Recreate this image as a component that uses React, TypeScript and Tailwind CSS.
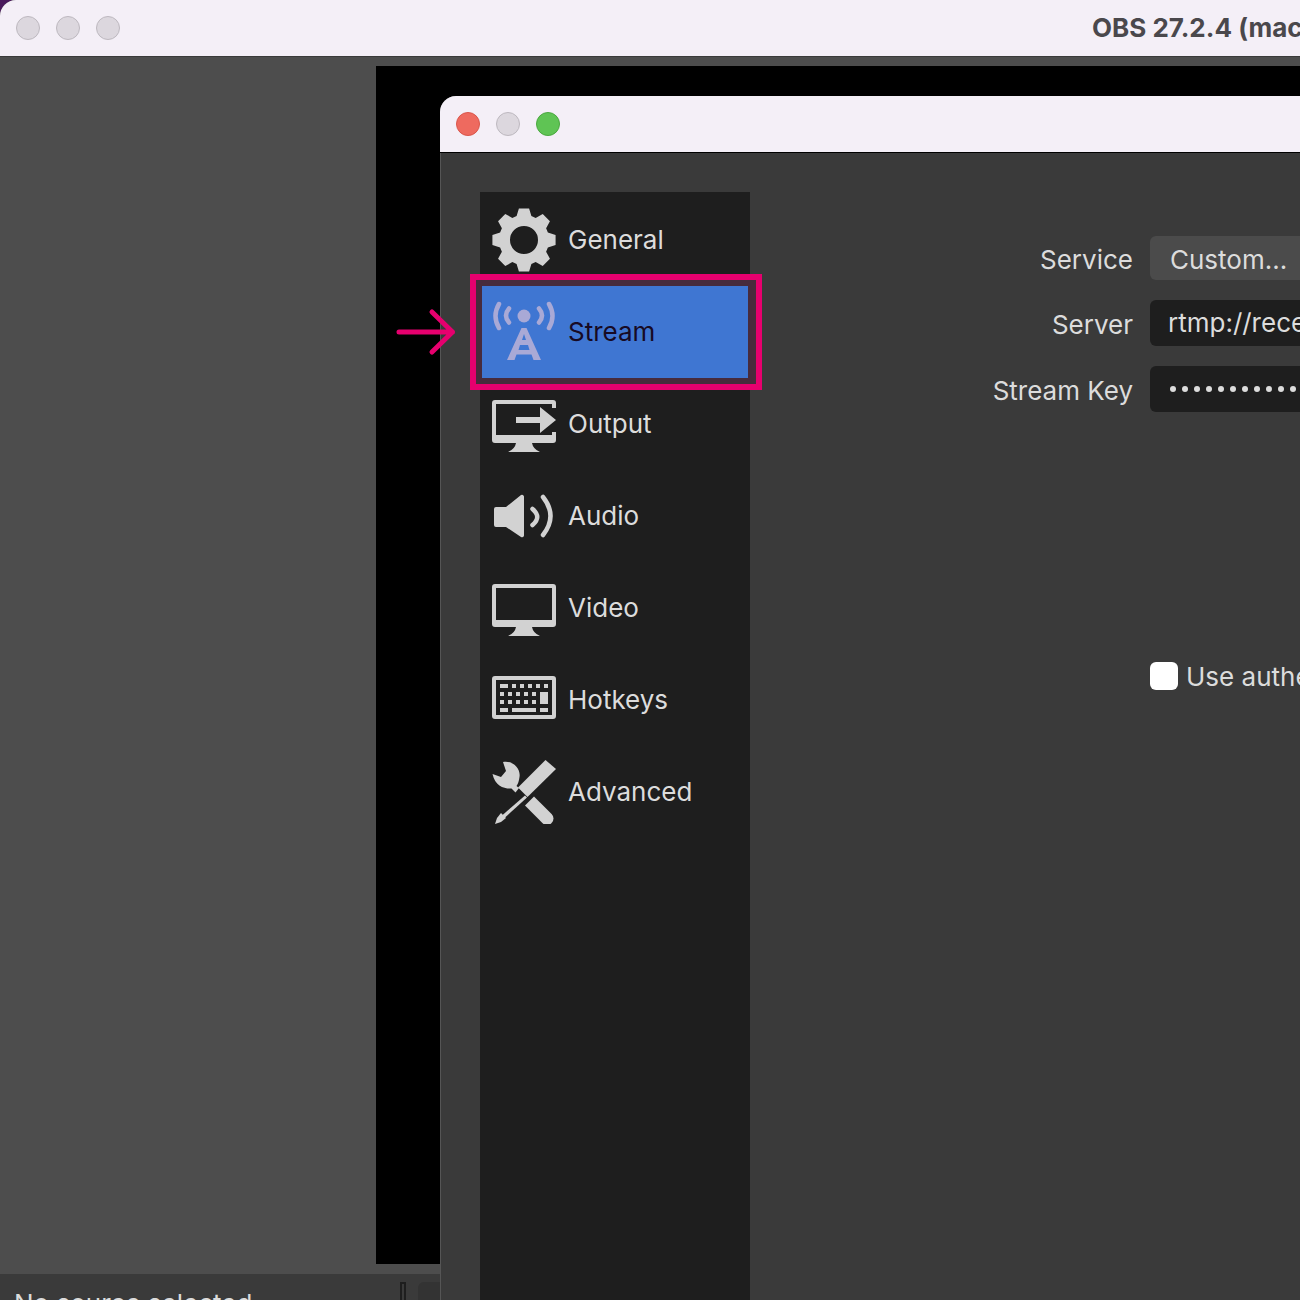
import type { ReactNode } from 'react'

function gearPath() {
  const parts: string[] = []
  for (let i = 0; i < 8; i++) {
    const a = (i * Math.PI) / 4 - Math.PI / 2
    const pts = [
      [25, a - 0.3],
      [32, a - 0.16],
      [32, a + 0.16],
      [25, a + 0.3],
    ]
    for (const [r, t] of pts) {
      parts.push(`${(32 + r * Math.cos(t)).toFixed(2)} ${(32 + r * Math.sin(t)).toFixed(2)}`)
    }
  }
  return `M${parts.join('L')}Z M46 32a14 14 0 1 0-28 0a14 14 0 1 0 28 0Z`
}

const keys = [
  [8, 16, 8, 4], [20, 16, 4, 4], [28, 16, 4, 4], [36, 16, 4, 4], [44, 16, 4, 4], [52, 16, 4, 4],
  [8, 24, 4, 4], [16, 24, 4, 4], [24, 24, 4, 4], [32, 24, 4, 4], [40, 24, 4, 4], [48, 24, 8, 12],
  [8, 32, 4, 4], [16, 32, 4, 4], [24, 32, 4, 4], [32, 32, 4, 4], [40, 32, 4, 4],
  [8, 40, 8, 4], [20, 40, 24, 4], [48, 40, 8, 4],
]

function Icon({ children }: { children: ReactNode }) {
  return (
    <svg viewBox="0 0 64 64" className="size-16 shrink-0" fill="currentColor">
      {children}
    </svg>
  )
}

const stand = 'M24 51H40Q41 57 48 60H16Q23 57 24 51Z'

const icons: Record<string, ReactNode> = {
  General: <path fillRule="evenodd" d={gearPath()} />,
  Stream: (
    <>
      <circle cx="32" cy="16" r="6.5" />
      <g fill="none" stroke="currentColor" strokeLinecap="round">
        <path strokeWidth="4.5" d="M7 4Q0 16 7 28M57 4Q64 16 57 28" />
        <path strokeWidth="4.5" d="M17 8.5Q11 15.5 17 22.5M47 8.5Q53 15.5 47 22.5" />
      </g>
      <path
        fillRule="evenodd"
        d="M29.5 28H34.5L49 60H41.5L39.5 54.5H24.5L22.5 60H15ZM32 34L30 40H34ZM28 45L26.5 50H37.5L36 45Z"
      />
    </>
  ),
  Output: (
    <>
      <path d="M3 8H61A3 3 0 0 1 64 11V16H60V12H4V43H60V40H64V48A3 3 0 0 1 61 51H3A3 3 0 0 1 0 48V11A3 3 0 0 1 3 8Z" />
      <path d={stand} />
      <path d="M24 25H48V15L64 28L48 41V31H24Z" />
    </>
  ),
  Audio: (
    <>
      <path d="M4 23H14L29 11A2 2 0 0 1 32 12.5V51.5A2 2 0 0 1 29 53L14 43H4A2 2 0 0 1 2 41V25A2 2 0 0 1 4 23Z" />
      <g fill="none" stroke="currentColor" strokeWidth="4.5" strokeLinecap="round">
        <path d="M40.5 25Q50 33 40.5 41" />
        <path d="M51 13Q66 32 51 51" />
      </g>
    </>
  ),
  Video: (
    <>
      <path
        fillRule="evenodd"
        d="M3 8H61A3 3 0 0 1 64 11V48A3 3 0 0 1 61 51H3A3 3 0 0 1 0 48V11A3 3 0 0 1 3 8ZM4 12V44H60V12Z"
      />
      <path d={stand} />
    </>
  ),
  Hotkeys: (
    <>
      <path
        fillRule="evenodd"
        d="M3 8H61A3 3 0 0 1 64 11V48A3 3 0 0 1 61 51H3A3 3 0 0 1 0 48V11A3 3 0 0 1 3 8ZM4 12V47H60V12Z"
      />
      {keys.map(([x, y, w, h]) => (
        <rect key={`${x}-${y}`} x={x} y={y} width={w} height={h} />
      ))}
    </>
  ),
  Advanced: (
    <>
      <path d="M11 2C20 0 29 8 27.5 17C27 21 26 24 24.5 26L27 28L23.5 32.5L19.5 28.5C12 29 3 26 0.5 14L9 17L14 11Z" />
      <path d="M53.5 0L64 9L35.5 37L26 27.5Z" />
      <path d="M33 35.5L35 37.5L12.5 58L10 55.5Z" />
      <path d="M9 53L14 58L9 62L3 64L5 58Z" />
      <path d="M42 36.5L59.6 53.9A6.5 6.5 0 0 1 50.4 63.1L33 45.6Z" />
    </>
  ),
}

const sections = ['General', 'Stream', 'Output', 'Audio', 'Video', 'Hotkeys', 'Advanced']

function Dot({ className }: { className: string }) {
  return <span className={`size-6 rounded-full border ${className}`} />
}

function FormRow({ label, children }: { label: string; children: ReactNode }) {
  return (
    <div className="flex items-center gap-4">
      <div className="w-96 pt-1 pr-px text-right">{label}</div>
      <div className="flex-1">{children}</div>
    </div>
  )
}

export default function App() {
  return (
    <div
      className="relative h-screen overflow-hidden bg-[#4a1a5c] text-[26px] leading-8 text-[#dcdcdc]"
      style={{ fontFamily: 'Inter, sans-serif' }}
    >
      <div className="flex h-full flex-col overflow-hidden rounded-tl-2xl bg-[#4d4d4d]">
        <header className="relative box-content flex h-14 shrink-0 items-center gap-4 border-b border-[#3a3a3a] bg-[#f4eff7] pl-4">
          <Dot className="border-[#bdb8bf] bg-[#dcd7de]" />
          <Dot className="border-[#bdb8bf] bg-[#dcd7de]" />
          <Dot className="border-[#bdb8bf] bg-[#dcd7de]" />
          <div className="absolute left-273 whitespace-nowrap font-bold text-[#4a484c]">
            OBS 27.2.4 (mac) - Profile: Untitled - Scenes: Untitled
          </div>
        </header>

        <div className="flex min-h-0 flex-1 pt-2.25 pb-2.5">
          <div className="w-94 shrink-0" />
          <div className="flex-1 bg-black" />
        </div>

        <div className="flex h-6.5 shrink-0 items-start overflow-hidden bg-[#3a3a3a]">
          <div className="w-100 shrink-0 pl-3.5 pt-3.5 whitespace-nowrap">No source selected</div>
          <div className="flex items-start gap-3 pt-2">
            <span className="h-6 w-1.5 border-2 border-[#1e1e1e]" />
            <span className="flex h-6 w-10 items-start justify-end rounded-md bg-[#333333]">
              <svg viewBox="0 0 24 24" className="size-6 text-[#8a8a8a]" fill="currentColor">
                <path d="M10 11L14 12L20 4L24 6V24H10L13 17Z" />
              </svg>
            </span>
          </div>
        </div>
      </div>

      <div className="absolute top-24 right-0 bottom-0 left-110 flex flex-col overflow-hidden rounded-tl-2xl bg-[#3a3a3a] shadow-[inset_1px_0_0_#555555]">
        <div className="box-content flex h-14 shrink-0 items-center gap-4 border-b border-black bg-[#f4eff7] pl-4">
          <Dot className="border-[#d9564b] bg-[#ee6a5f]" />
          <Dot className="border-[#bdb8bf] bg-[#dcd7de]" />
          <Dot className="border-[#4aa83f] bg-[#5fc454]" />
        </div>

        <div className="flex flex-1 pl-10 pt-9.75">
          <nav className="relative w-[270px] shrink-0 bg-[#1e1e1e] pt-0.5">
            {sections.map((name) => (
              <div key={name} className="relative">
                {name === 'Stream' && (
                  <div className="absolute -top-3 -right-3 -bottom-3 -left-2.5 border-6 border-[#e6006e] bg-[#472b3c]" />
                )}
                <div
                  className={
                    name === 'Stream'
                      ? 'relative mx-0.5 flex h-23 items-center gap-3 bg-[#3f76d2] px-2.5 text-[#170a24]'
                      : 'relative mx-0.5 flex h-23 items-center gap-3 px-2.5'
                  }
                >
                  <span className={name === 'Stream' ? 'text-[#a9a9d6]' : 'text-[#d2d2d2]'}>
                    <Icon>{icons[name]}</Icon>
                  </span>
                  {name}
                </div>
              </div>
            ))}
          </nav>

          <div className="flex-1 pt-11">
            <div className="flex flex-col gap-5">
              <FormRow label="Service">
                <div className="flex h-11 items-center rounded-md bg-[#4b4b4b] px-5 pt-1">Custom...</div>
              </FormRow>
              <FormRow label="Server">
                <div className="flex h-11.5 items-center rounded-md bg-[#1e1e1e] px-4.5 whitespace-nowrap">
                  rtmp://receive.example.com/live
                </div>
              </FormRow>
              <FormRow label="Stream Key">
                <div className="flex h-11.5 items-center gap-1.5 rounded-md bg-[#1e1e1e] px-5">
                  {Array.from({ length: 24 }, (_, i) => (
                    <span key={i} className="size-1.5 rounded-full bg-[#dcdcdc]" />
                  ))}
                </div>
              </FormRow>
            </div>
            <div className="mt-61.75 flex">
              <div className="w-96" />
              <label className="ml-4 flex items-center gap-2 whitespace-nowrap">
                <span className="size-7 rounded-md bg-white" />
                <span className="pt-0.5">Use authentication</span>
              </label>
            </div>
          </div>
        </div>
      </div>

      <svg
        viewBox="0 0 64 48"
        className="absolute top-77 left-99 h-12 w-16 text-[#e6006e]"
        fill="none"
        stroke="currentColor"
        strokeWidth="5"
        strokeLinecap="round"
        strokeLinejoin="round"
      >
        <path d="M3 24H56.5M36 4L56.5 24L36 44" />
      </svg>
    </div>
  )
}
